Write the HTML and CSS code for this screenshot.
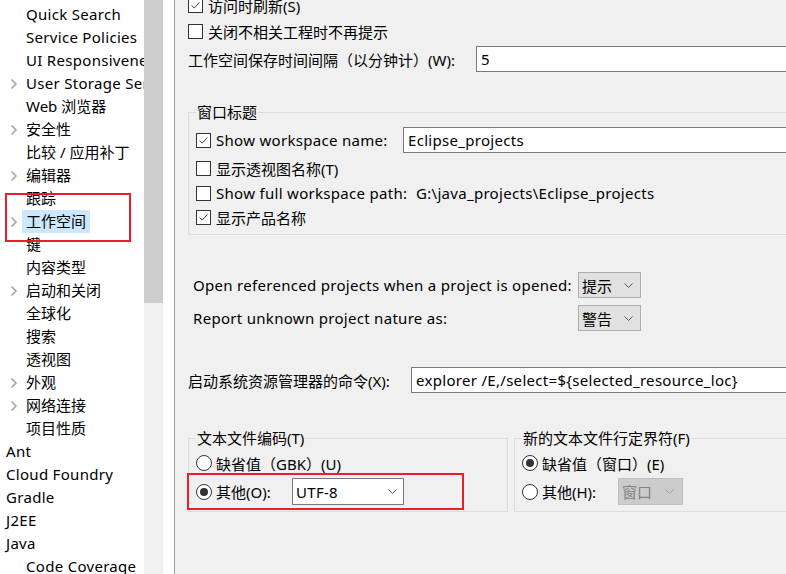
FILE: index.html
```html
<!DOCTYPE html>
<html>
<head>
<meta charset="utf-8">
<link rel="stylesheet" href="styles.css">
</head>
<body>
<div class="app">
  <div class="tree">
    <div class="row"><span class="tw"></span><span class="lbl en">Quick Search</span></div>
    <div class="row"><span class="tw"></span><span class="lbl en">Service Policies</span></div>
    <div class="row"><span class="tw"></span><span class="lbl en">UI Responsiveness Monitoring</span></div>
    <div class="row"><span class="tw"><svg class="chev" viewBox="0 0 8 12"><path d="M1.5 1.5 L6 6 L1.5 10.5"/></svg></span><span class="lbl en">User Storage Service</span></div>
    <div class="row"><span class="tw"></span><span class="lbl">Web 浏览器</span></div>
    <div class="row"><span class="tw"><svg class="chev" viewBox="0 0 8 12"><path d="M1.5 1.5 L6 6 L1.5 10.5"/></svg></span><span class="lbl">安全性</span></div>
    <div class="row"><span class="tw"></span><span class="lbl">比较 / 应用补丁</span></div>
    <div class="row"><span class="tw"><svg class="chev" viewBox="0 0 8 12"><path d="M1.5 1.5 L6 6 L1.5 10.5"/></svg></span><span class="lbl">编辑器</span></div>
    <div class="row"><span class="tw"></span><span class="lbl">跟踪</span></div>
    <div class="row"><span class="tw"><svg class="chev" viewBox="0 0 8 12"><path d="M1.5 1.5 L6 6 L1.5 10.5"/></svg></span><span class="lbl selected">工作空间</span></div>
    <div class="row"><span class="tw"></span><span class="lbl">键</span></div>
    <div class="row"><span class="tw"></span><span class="lbl">内容类型</span></div>
    <div class="row"><span class="tw"><svg class="chev" viewBox="0 0 8 12"><path d="M1.5 1.5 L6 6 L1.5 10.5"/></svg></span><span class="lbl">启动和关闭</span></div>
    <div class="row"><span class="tw"></span><span class="lbl">全球化</span></div>
    <div class="row"><span class="tw"></span><span class="lbl">搜索</span></div>
    <div class="row"><span class="tw"></span><span class="lbl">透视图</span></div>
    <div class="row"><span class="tw"><svg class="chev" viewBox="0 0 8 12"><path d="M1.5 1.5 L6 6 L1.5 10.5"/></svg></span><span class="lbl">外观</span></div>
    <div class="row"><span class="tw"><svg class="chev" viewBox="0 0 8 12"><path d="M1.5 1.5 L6 6 L1.5 10.5"/></svg></span><span class="lbl">网络连接</span></div>
    <div class="row"><span class="tw"></span><span class="lbl">项目性质</span></div>
    <div class="row top"><span class="lbl en">Ant</span></div>
    <div class="row top"><span class="lbl en">Cloud Foundry</span></div>
    <div class="row top"><span class="lbl en">Gradle</span></div>
    <div class="row top"><span class="lbl en">J2EE</span></div>
    <div class="row top"><span class="lbl en">Java</span></div>
    <div class="row"><span class="tw"></span><span class="lbl en">Code Coverage</span></div>
    <div class="mark tree-mark"></div>
  </div>
  <div class="vscroll"><div class="thumb"></div></div>
  <div class="sash"></div>
  <div class="page">
    <div class="content">
      <div class="line l-first"><span class="cb"><svg viewBox="0 0 15 15"><path d="M3 7.5 L6 10.5 L12 4"/></svg></span><span>访问时刷新(S)</span></div>
      <div class="line l-second"><span class="cb"></span><span>关闭不相关工程时不再提示</span></div>
      <div class="line l-field"><span class="flabel">工作空间保存时间间隔（以分钟计）(W):</span><div class="input in-interval">5</div></div>

      <fieldset class="group title-group">
        <legend>窗口标题</legend>
        <div class="line l-ws"><span class="cb"><svg viewBox="0 0 15 15"><path d="M3 7.5 L6 10.5 L12 4"/></svg></span><span class="glabel en">Show workspace name:</span><div class="input in-ws en">Eclipse_projects</div></div>
        <div class="line l-persp"><span class="cb"></span><span>显示透视图名称(T)</span></div>
        <div class="line l-path"><span class="cb"></span><span class="glabel en">Show full workspace path:</span><span class="path en">G:\java_projects\Eclipse_projects</span></div>
        <div class="line"><span class="cb"><svg viewBox="0 0 15 15"><path d="M3 7.5 L6 10.5 L12 4"/></svg></span><span>显示产品名称</span></div>
      </fieldset>

      <div class="combos">
        <span class="clabel en">Open referenced projects when a project is opened:</span>
        <div class="combo">提示<svg class="dd" viewBox="0 0 9 5"><path d="M0.5 0.5 L4.5 4.5 L8.5 0.5"/></svg></div>
        <span class="clabel en">Report unknown project nature as:</span>
        <div class="combo">警告<svg class="dd" viewBox="0 0 9 5"><path d="M0.5 0.5 L4.5 4.5 L8.5 0.5"/></svg></div>
      </div>

      <div class="line l-cmd"><span class="cmdlabel">启动系统资源管理器的命令(X):</span><div class="input in-cmd en">explorer /E,/select=${selected_resource_loc}</div></div>

      <div class="groups">
        <fieldset class="group enc">
          <legend>文本文件编码(T)</legend>
          <div class="line l-r1"><span class="rb"></span><span>缺省值（GBK）(U)</span></div>
          <div class="line l-r2"><span class="rb on"></span><span class="rlabel">其他(O):</span><div class="combo white"><span class="en">UTF-8</span><svg class="dd" viewBox="0 0 9 5"><path d="M0.5 0.5 L4.5 4.5 L8.5 0.5"/></svg></div></div>
          <div class="mark enc-mark"></div>
        </fieldset>
        <fieldset class="group delim">
          <legend>新的文本文件行定界符(F)</legend>
          <div class="line l-r1"><span class="rb on"></span><span>缺省值（窗口）(E)</span></div>
          <div class="line l-r2"><span class="rb"></span><span class="rlabel">其他(H):</span><div class="combo disabled">窗口<svg class="dd" viewBox="0 0 9 5"><path d="M0.5 0.5 L4.5 4.5 L8.5 0.5"/></svg></div></div>
        </fieldset>
      </div>
    </div>
  </div>
</div>
</body>
</html>
```

FILE: styles.css
```css
* { box-sizing: border-box; }
html, body {
  margin: 0;
  padding: 0;
  width: 786px;
  height: 574px;
  overflow: hidden;
  background: #f0f0f0;
}
body {
  font-family: "Noto Sans", "Noto Sans CJK SC", sans-serif;
  font-size: 15px;
  color: #000;
}
.en { letter-spacing: 0.3px; }
.app {
  display: flex;
  height: 574px;
  width: 786px;
}

/* tree */
.tree {
  position: relative;
  width: 144px;
  flex: none;
  background: #fff;
  padding-top: 3px;
  overflow: hidden;
  white-space: nowrap;
}
.row {
  display: flex;
  align-items: center;
  height: 23px;
  padding-left: 2px;
}
.tw {
  width: 20px;
  flex: none;
  display: flex;
  align-items: center;
  justify-content: center;
  padding-left: 4px;
}
.chev {
  width: 8px;
  height: 12px;
  fill: none;
  stroke: #a4a4a4;
  stroke-width: 1.6;
}
.lbl {
  padding: 0 4px;
  height: 23px;
  line-height: 22px;
}
.lbl.selected { background: #cce8ff; }
.mark {
  position: absolute;
  border: 2px solid #e3202b;
  pointer-events: none;
}
.tree-mark {
  left: 5px;
  top: 193px;
  width: 126px;
  height: 49px;
}

.vscroll {
  width: 19px;
  flex: none;
  background: #f0f0f0;
}
.thumb {
  height: 303px;
  background: #cdcdcd;
}
.sash {
  width: 12px;
  flex: none;
  background: #fff;
  border-right: 1px solid #a0a0a0;
}

/* page */
.page {
  flex: 1;
  min-width: 0;
  background: #f0f0f0;
  overflow: hidden;
  white-space: nowrap;
}
.content {
  margin-top: -7px;
  padding-left: 13px;
}
.line {
  display: flex;
  align-items: center;
  height: 24px;
}
.l-second { margin-top: 2px; }
.cb {
  width: 15px;
  height: 15px;
  flex: none;
  border: 1px solid #333;
  background: #fff;
  margin-right: 5px;
  display: flex;
}
.cb svg {
  width: 13px;
  height: 13px;
  fill: none;
  stroke: #333;
  stroke-width: 1.1;
}
.l-field {
  height: 26px;
  margin-top: 3px;
}
.flabel { width: 288px; flex: none; }
.input {
  height: 26px;
  border: 1px solid #7a7a7a;
  background: #fff;
  padding: 0 4px;
  line-height: 24px;
  flex: none;
}
.in-interval { width: 360px; }

.group {
  margin: 0;
  border: 1px solid #dcdcdc;
  padding: 0 7px;
  flex: none;
}
.group legend {
  padding: 0 1px;
  line-height: 20px;
  height: 20px;
}
.title-group {
  margin-top: 30px;
  width: 640px;
  padding-top: 5px;
  padding-bottom: 5px;
}
.l-ws { height: 26px; }
.glabel { width: 187px; flex: none; }
.in-ws { width: 420px; }
.l-persp { margin-top: 3px; }
.l-path { margin-top: 1px; }
.path { margin-left: 13px; }

.combos {
  display: grid;
  grid-template-columns: 385px auto;
  grid-auto-rows: 26px;
  row-gap: 7px;
  margin-top: 37px;
  padding-left: 5px;
  justify-content: start;
  align-items: center;
}
.combo {
  height: 26px;
  width: 63px;
  border: 1px solid #adadad;
  background: #e1e1e1;
  display: flex;
  align-items: center;
  justify-content: space-between;
  padding: 0 7px 0 3px;
}
.dd {
  width: 9px;
  height: 5px;
  fill: none;
  stroke: #555;
  stroke-width: 1;
}
.l-cmd {
  height: 26px;
  margin-top: 36px;
}
.cmdlabel { width: 223px; flex: none; }
.in-cmd { width: 420px; }

.groups {
  display: flex;
  gap: 6px;
  margin-top: 35px;
}
.enc {
  position: relative;
  width: 320px;
  padding-bottom: 6px;
}
.delim {
  width: 300px;
  padding-bottom: 6px;
}
.l-r1 { margin-top: 3px; }
.l-r2 { margin-top: 3px; height: 27px; }
.rb {
  width: 16px;
  height: 16px;
  flex: none;
  border: 1px solid #333;
  border-radius: 50%;
  background: #fff;
  margin-right: 4px;
  display: flex;
  align-items: center;
  justify-content: center;
}
.rb.on::after {
  content: "";
  width: 8px;
  height: 8px;
  border-radius: 50%;
  background: #333;
}
.rlabel { width: 76px; flex: none; }
.combo.white {
  width: 112px;
  height: 27px;
  background: #fff;
  border-color: #7a7a7a;
  padding: 0 6px 0 3px;
}
.combo.disabled {
  width: 65px;
  height: 27px;
  background: #cccccc;
  border-color: #bfbfbf;
  color: #838383;
  padding: 0 8px 0 3px;
}
.combo.disabled .dd { stroke: #a0a0a0; }
.enc-mark {
  left: -2px;
  top: 25px;
  width: 277px;
  height: 37px;
}
```
